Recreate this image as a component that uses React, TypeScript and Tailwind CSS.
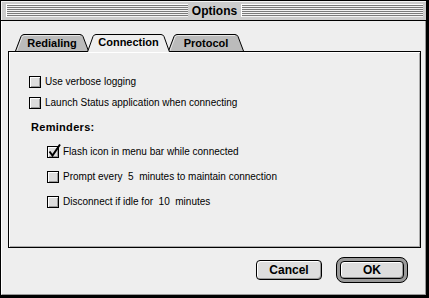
import React from "react";

const Stripes = () => (
  <div className="flex-1 h-[13px] border-l border-t border-white bg-[repeating-linear-gradient(to_bottom,#7a7a7a_0px,#7a7a7a_1px,#f2f2f2_1px,#f2f2f2_2px)]" />
);

type TabProps = { label: string; width: number; selected?: boolean; className?: string };

const Tab = ({ label, width, selected, className }: TabProps) => {
  const h = selected ? 18 : 17;
  const d = `M0.5,${h} L6,2.5 Q7,0.5 9,0.5 L${width - 9},0.5 Q${width - 7},0.5 ${width - 6},2.5 L${width - 0.5},${h}`;
  return (
    <div
      className={`relative flex items-center justify-center ${selected ? "h-[18px] z-20" : "h-[17px] z-10"} ${className ?? ""}`}
      style={{ width }}
    >
      <svg className="absolute inset-0 overflow-visible" width={width} height={h}>
        <path d={d} fill={selected ? "#eeeeee" : "#bbbbbb"} stroke="none" />
        {!selected && (
          <path
            d={`M1.8,${h} L7,3.2 Q7.8,1.5 9.5,1.5 L${width - 9},1.5`}
            fill="none"
            stroke="#e6e6e6"
            strokeWidth="1"
          />
        )}
        <path d={d} fill="none" stroke="#000" strokeWidth="1" />
      </svg>
      <span className={`relative text-[11px] font-bold leading-none text-black ${selected ? "-mt-[1px]" : "mt-[1px]"}`}>
        {label}
      </span>
    </div>
  );
};

const Checkbox = ({ checked }: { checked?: boolean }) => (
  <span className="relative w-3 h-3 shrink-0 border border-black bg-[#dddddd] shadow-[inset_1px_1px_0_#fff,inset_-1px_-1px_0_#999]">
    {checked && (
      <svg className="absolute -left-px -top-[3px] overflow-visible" width="15" height="15">
        <path d="M2.5,7.5 L5.5,11.5 L13,0.5" fill="none" stroke="#000" strokeWidth="2" />
      </svg>
    )}
  </span>
);

const Row = ({ label, checked, className }: { label: string; checked?: boolean; className?: string }) => (
  <div className={`flex items-center gap-[4px] h-3 ${className ?? ""}`}>
    <Checkbox checked={checked} />
    <span className="text-[10px] leading-none whitespace-pre text-black">{label}</span>
  </div>
);

export default function App() {
  return (
    <div className="w-[429px] h-[298px] flex flex-col border-l border-t border-r-[3px] border-b-[3px] border-black bg-[#eeeeee] font-['Liberation_Sans',Arial,sans-serif] select-none">
      {/* title bar */}
      <div className="h-[20px] flex items-center gap-[3px] pl-[5px] pr-[3px] bg-[#cccccc] border-b border-black shadow-[inset_1px_1px_0_#f4f4f4]">
        <Stripes />
        <span className="text-[12px] font-bold leading-none px-[1px] text-black">Options</span>
        <Stripes />
      </div>

      {/* body */}
      <div className="flex-1 flex flex-col pl-[6px] pr-[4px] pt-[13px] border-l border-white border-r border-r-[#999] border-b border-b-[#999]">
        <div className="relative flex items-start h-[17px]">
          <Tab label="Redialing" width={74} className="ml-[7px]" />
          <Tab label="Connection" width={83} selected className="-ml-[2px]" />
          <Tab label="Protocol" width={76} className="-ml-[2px]" />
        </div>

        <div className="h-[197px] border border-black bg-[#eeeeee] shadow-[inset_1px_1px_0_#fff,inset_-1px_-1px_0_#aaa] pl-[20px] pt-[24px] flex flex-col">
          <Row label="Use verbose logging" />
          <Row label="Launch Status application when connecting" className="mt-[9px]" />
          <div className="mt-[13px] h-3 ml-[2px] text-[11px] font-bold leading-none tracking-[0.3px] text-black">
            Reminders:
          </div>
          <div className="pl-[18px] flex flex-col">
            <Row label="Flash icon in menu bar while connected" checked className="mt-[12px]" />
            <Row label="Prompt every  5  minutes to maintain connection" className="mt-[13px]" />
            <Row label="Disconnect if idle for  10  minutes" className="mt-[13px]" />
          </div>
        </div>

        <div className="flex justify-end items-center gap-[14px] mt-[9px] pr-[13px]">
          <button className="w-[66px] h-[20px] rounded-[4px] border border-black bg-[#dddddd] shadow-[inset_1px_1px_0_#fff,inset_-1px_-1px_0_#999] text-[12px] font-bold leading-none text-black">
            Cancel
          </button>
          <div className="w-[72px] h-[26px] rounded-[8px] border border-black bg-[#999999] p-[3px] flex">
            <button className="flex-1 rounded-[4px] border border-black bg-[#dddddd] shadow-[inset_1px_1px_0_#fff,inset_-1px_-1px_0_#999] text-[12px] font-bold leading-none text-black">
              OK
            </button>
          </div>
        </div>
      </div>
    </div>
  );
}
